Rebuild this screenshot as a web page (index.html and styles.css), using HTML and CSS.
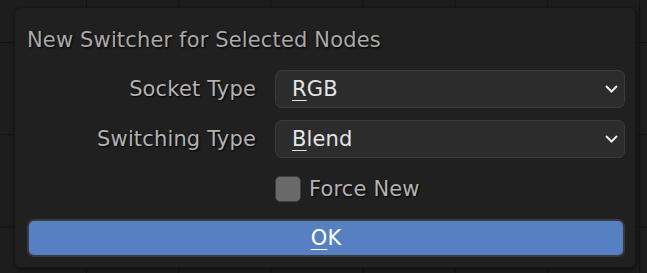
FILE: index.html
```html
<!DOCTYPE html>
<html lang="en">
<head>
    <meta charset="UTF-8">
    <title>New Switcher for Selected Nodes</title>
    <link rel="stylesheet" href="styles.css">
</head>
<body>

    <div class="dialog">
        <div class="title">New Switcher for Selected Nodes</div>

        <div class="props">
            <div class="label">Socket Type</div>
            <div class="dropdown">
                <span><u>R</u>GB</span>
                <svg class="chevron" width="13" height="8" viewBox="0 0 13 8">
                    <polyline points="1,1 6.5,6.5 12,1" />
                </svg>
            </div>

            <div class="label">Switching Type</div>
            <div class="dropdown">
                <span><u>B</u>lend</span>
                <svg class="chevron" width="13" height="8" viewBox="0 0 13 8">
                    <polyline points="1,1 6.5,6.5 12,1" />
                </svg>
            </div>

            <div></div>
            <label class="check">
                <span class="box"></span>
                <span>Force New</span>
            </label>
        </div>

        <button class="ok"><u>O</u>K</button>
    </div>

</body>
</html>
```

FILE: styles.css
```css
body {
    margin: 0;
    height: 273px;
    font-family: "DejaVu Sans", sans-serif;
    font-size: 21px;
    letter-spacing: 0.15px;
    background-color: #1d1d1d;
    /* node editor grid */
    background-image:
        linear-gradient(to right, #131313 1px, transparent 1px),
        linear-gradient(to bottom, #131313 1px, transparent 1px);
    background-size: 92.2px 92.2px;
    background-position: 86px 42px;
    overflow: hidden;
}
.dialog {
    box-sizing: border-box;
    width: 622px;
    height: 261px;
    margin: 7px 0 0 14px;
    padding: 20px 12px 11px 12px;
    background: #202020;
    border: 1px solid #171717;
    border-radius: 7px;
    box-shadow: 1px 2px 5px rgba(0, 0, 0, 0.45);
}
.title {
    height: 24px;
    line-height: 24px;
    color: #a9a9a9;
    text-shadow: 1px 1px 2px #000;
}
.props {
    display: grid;
    grid-template-columns: 229px 350px;
    column-gap: 19px;
    row-gap: 12px;
    margin-top: 18px;
    align-items: center;
}
.label {
    text-align: right;
    color: #b2b2b2;
    text-shadow: 1px 1px 2px #000;
}
.dropdown {
    box-sizing: border-box;
    height: 38px;
    display: flex;
    align-items: center;
    justify-content: space-between;
    padding: 0 6px 0 16px;
    background: #2c2c2c;
    border: 1px solid #3c3c3c;
    border-radius: 7px;
    color: #e4e4e4;
}
u {
    text-decoration-thickness: 1px;
    text-underline-offset: 4px;
}
.chevron polyline {
    fill: none;
    stroke: #e8e8e8;
    stroke-width: 2;
}
.check {
    display: flex;
    align-items: center;
    gap: 8px;
    margin-top: 6px;
    color: #b2b2b2;
    text-shadow: 1px 1px 2px #000;
}
.box {
    box-sizing: border-box;
    width: 26px;
    height: 26px;
    background: #6a6a6a;
    border: 1px solid #3e3e3e;
    border-radius: 5px;
}
.ok {
    display: block;
    box-sizing: border-box;
    width: 598px;
    height: 38px;
    margin-top: 17px;
    font-family: inherit;
    font-size: 21px;
    letter-spacing: 0.15px;
    color: #ffffff;
    background: #5680c2;
    border: 2px solid #3a3a3a;
    border-radius: 7px;
    padding: 0;
}
```
